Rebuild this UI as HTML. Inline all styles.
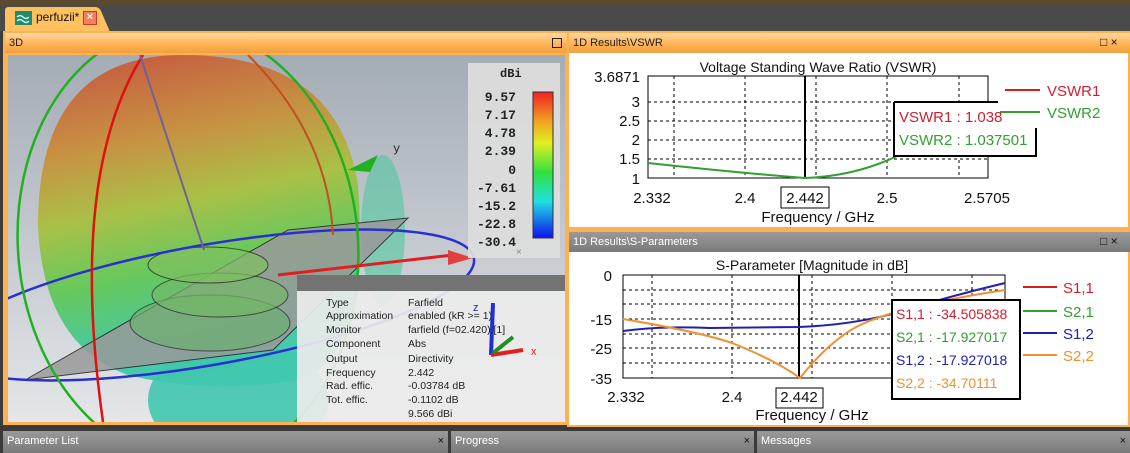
<!DOCTYPE html>
<html><head><meta charset="utf-8"><style>
*{margin:0;padding:0;box-sizing:border-box}
body{width:1130px;height:453px;overflow:hidden;background:#3c3c3c;font-family:"Liberation Sans",sans-serif;position:relative}
.a{position:absolute}
.hdr{position:absolute;height:20px;font-size:11px;line-height:20px;padding-left:4px;color:#222;overflow:hidden}
.org{background:linear-gradient(#ffd9a0,#ffb050 60%,#f0a040)}
.gry{background:linear-gradient(#9a9a9a,#7a7a7a);color:#fff}
</style></head><body>
<div class="a" style="left:0;top:0;width:1130px;height:5px;background:#5a4a30"></div>
<div class="a" style="left:0;top:5px;width:1130px;height:26px;background:#4a4a4a"></div>
<svg class="a" style="left:0;top:4px" width="120" height="28"><path d="M5 28 V6 Q5 3 9 3 H95 Q99 3 101 7 L110 28 Z" fill="#ffc060"/></svg>
<div class="a" style="left:15px;top:11px;width:17px;height:14px;background:#1f8a70"></div>
<svg class="a" style="left:15px;top:11px" width="17" height="14"><path d="M2 6 q3-3 6 0 t6 0 M2 10 q3-3 6 0 t6 0" stroke="#cfe" fill="none" stroke-width="1.3"/></svg>
<div class="a" style="left:36px;top:10px;font-size:12px;color:#111">perfuzii*</div>
<div class="a" style="left:83px;top:11px;width:14px;height:14px;background:#f08060;border:1px solid #c04020;color:#fff;font-size:11px;line-height:11px;text-align:center;font-weight:bold">×</div>
<div class="a" style="left:3px;top:31px;width:565px;height:394px;background:#ffb050"></div>
<div class="hdr org" style="left:5px;top:33px;width:562px">3D</div>
<div class="a" style="left:552px;top:38px;width:10px;height:10px;border:1px solid #222"></div>
<!-- 3D view -->
<svg class="a" style="left:8px;top:55px" width="557" height="367">
<defs>
<linearGradient id="bg" x1="0" y1="0" x2="0" y2="1"><stop offset="0" stop-color="#a4acb6"/><stop offset="1" stop-color="#e4e6e8"/></linearGradient>
<linearGradient id="sp" x1="0.3" y1="0" x2="0.5" y2="1"><stop offset="0" stop-color="#c85a3a"/><stop offset="0.25" stop-color="#c8903c"/><stop offset="0.45" stop-color="#a8c040"/><stop offset="0.65" stop-color="#60c858"/><stop offset="0.85" stop-color="#40c8a0"/><stop offset="1" stop-color="#40c8b0"/></linearGradient>
<linearGradient id="cb" x1="0" y1="0" x2="0" y2="1"><stop offset="0" stop-color="#f02020"/><stop offset="0.2" stop-color="#f0a020"/><stop offset="0.35" stop-color="#e0f020"/><stop offset="0.55" stop-color="#30e040"/><stop offset="0.75" stop-color="#20e0e0"/><stop offset="1" stop-color="#1010f0"/></linearGradient>
</defs>
<rect width="557" height="367" fill="url(#bg)"/>
<ellipse cx="230" cy="345" rx="90" ry="60" fill="#40c8b0" opacity="0.9"/>
<path d="M30 170 Q30 0 175 0 Q330 0 350 130 Q355 190 345 250 Q335 310 290 325 Q200 340 120 320 Q35 290 30 170Z" fill="url(#sp)" opacity="0.95"/>
<ellipse cx="375" cy="175" rx="22" ry="75" fill="#50c8a0" opacity="0.6"/>
<polygon points="17,325 265,295 400,163 280,175" fill="#9a9a9a" stroke="#222" opacity="0.85"/>
<ellipse cx="202" cy="268" rx="80" ry="28" fill="#6cb070" stroke="#222" opacity="0.7"/>
<ellipse cx="212" cy="240" rx="68" ry="22" fill="#74b868" stroke="#222" opacity="0.7"/>
<ellipse cx="200" cy="210" rx="60" ry="18" fill="#80c060" stroke="#222" opacity="0.7"/>
<ellipse cx="200" cy="250" rx="270" ry="60" transform="rotate(-10 200 250)" fill="none" stroke="#2830d0" stroke-width="2.5"/>
<ellipse cx="180" cy="190" rx="170" ry="220" transform="rotate(-5 180 190)" fill="none" stroke="#20b020" stroke-width="2.5"/>
<path d="M135 0 Q60 120 95 367" fill="none" stroke="#e01010" stroke-width="2.5"/>
<path d="M240 0 Q320 80 325 180" fill="none" stroke="#c05020" stroke-width="2"/>
<path d="M132 0 L196 195" stroke="#7060a0" stroke-width="2"/>
<path d="M270 220 L445 200" stroke="#e02020" stroke-width="3"/>
<path d="M440 195 L465 203 L440 210Z" fill="#e04040"/>
<path d="M340 115 L370 100 L362 117Z" fill="#20b020"/>
<text x="385" y="97" font-size="12" font-family="Liberation Mono" fill="#222">y</text>
<rect x="460" y="8" width="92" height="195" fill="#dcdcdc" opacity="0.95"/>
<text x="492" y="22" font-size="12" font-weight="bold" font-family="Liberation Mono" fill="#222">dBi</text>
<rect x="525" y="37" width="20" height="146" fill="url(#cb)" stroke="#333"/>
<g font-size="13" font-weight="bold" font-family="Liberation Mono" fill="#222" text-anchor="end">
<text x="508" y="46">9.57</text><text x="508" y="64">7.17</text><text x="508" y="82">4.78</text><text x="508" y="100">2.39</text><text x="508" y="119">0</text><text x="508" y="137">-7.61</text><text x="508" y="155">-15.2</text><text x="508" y="173">-22.8</text><text x="508" y="191">-30.4</text></g>
<text x="508" y="200" font-size="10" fill="#888">×</text>
<rect x="289" y="220" width="268" height="147" fill="#ececec" opacity="0.92"/>
<rect x="289" y="220" width="268" height="16" fill="#666" opacity="0.9"/>
<g font-size="10.5" font-family="Liberation Sans" fill="#222">
<text x="318" y="251">Type</text><text x="318" y="264">Approximation</text><text x="318" y="278">Monitor</text><text x="318" y="292">Component</text><text x="318" y="307">Output</text><text x="318" y="321">Frequency</text><text x="318" y="334">Rad. effic.</text><text x="318" y="348">Tot. effic.</text>
<text x="400" y="251">Farfield</text><text x="400" y="264">enabled (kR &gt;= 1)</text><text x="400" y="278">farfield (f=02.420) [1]</text><text x="400" y="292">Abs</text><text x="400" y="307">Directivity</text><text x="400" y="321">2.442</text><text x="400" y="334">-0.03784 dB</text><text x="400" y="348">-0.1102 dB</text><text x="400" y="362">9.566 dBi</text></g>
<path d="M485 248 L483 300" stroke="#2030d0" stroke-width="4"/>
<path d="M483 300 L515 295" stroke="#e02020" stroke-width="4"/>
<path d="M485 298 L505 282" stroke="#209020" stroke-width="4"/>
<text x="465" y="256" font-size="11" fill="#2030a0">z</text>
<text x="523" y="300" font-size="11" fill="#e02020">x</text>
</svg>
<!-- VSWR panel -->
<div class="a" style="left:567px;top:31px;width:563px;height:200px;background:#ffb050"></div>
<div class="hdr org" style="left:569px;top:33px;width:561px">1D Results\VSWR</div>
<div class="a" style="left:1100px;top:35px;font-size:12px;color:#111">□ ×</div>
<svg class="a" style="left:569px;top:53px;background:#fff" width="559" height="174">
<g transform="translate(-569,-53)" font-family="Liberation Sans,sans-serif">
<text x="818" y="72" font-size="14" text-anchor="middle" fill="#111">Voltage Standing Wave Ratio (VSWR)</text>
<g stroke="#000" stroke-dasharray="3,3" stroke-width="1"><line x1="648" x2="988" y1="102" y2="102"/><line x1="648" x2="988" y1="121" y2="121"/><line x1="648" x2="988" y1="140" y2="140"/><line x1="648" x2="988" y1="159" y2="159"/>
<line x1="674" x2="674" y1="76" y2="178"/><line x1="745" x2="745" y1="76" y2="178"/><line x1="816" x2="816" y1="76" y2="178"/><line x1="887" x2="887" y1="76" y2="178"/><line x1="959" x2="959" y1="76" y2="178"/></g>
<rect x="648" y="76" width="340" height="102" fill="none" stroke="#000"/>
<line x1="805" x2="805" y1="76" y2="178" stroke="#000" stroke-width="2"/>
<path d="M648 163 Q730 172 805 178 Q860 176 905 152" fill="none" stroke="#30a030" stroke-width="2"/>
<g font-size="15" text-anchor="end" fill="#111"><text x="640" y="82">3.6871</text><text x="640" y="107">3</text><text x="640" y="126">2.5</text><text x="640" y="145">2</text><text x="640" y="164">1.5</text><text x="640" y="184">1</text></g>
<g font-size="15" text-anchor="middle" fill="#111"><text x="652" y="203">2.332</text><text x="745" y="203">2.4</text><text x="805" y="203">2.442</text><text x="887" y="203">2.5</text><text x="987" y="203">2.5705</text><text x="818" y="222">Frequency / GHz</text></g>
<rect x="781" y="187" width="48" height="21" fill="none" stroke="#000"/>
<line x1="1005" x2="1040" y1="90" y2="90" stroke="#d02020" stroke-width="2"/><line x1="1005" x2="1040" y1="112" y2="112" stroke="#30a030" stroke-width="2"/>
<text x="1047" y="96" font-size="15" fill="#d02030">VSWR1</text><text x="1047" y="118" font-size="15" fill="#30a030">VSWR2</text>
<rect x="894" y="102" width="142" height="55" fill="#fff"/>
<path d="M894 102 H998 M1036 128 V156 H894 V102" fill="none" stroke="#000" stroke-width="2"/>
<rect x="996" y="104" width="44" height="22" fill="#fff"/>
<line x1="1000" x2="1040" y1="112" y2="112" stroke="#30a030" stroke-width="2"/>
<text x="899" y="122" font-size="15" fill="#d02030">VSWR1 : 1.038</text><text x="899" y="145" font-size="15" fill="#30a030">VSWR2 : 1.037501</text>
</g></svg>
<!-- S-param panel -->
<div class="a" style="left:567px;top:230px;width:563px;height:197px;background:#ffb050"></div>
<div class="hdr gry" style="left:569px;top:232px;width:561px;color:#fff">1D Results\S-Parameters</div>
<div class="a" style="left:1100px;top:234px;font-size:12px;color:#111">□ ×</div>
<svg class="a" style="left:569px;top:252px;background:#fff" width="559" height="173">
<g transform="translate(-569,-252)" font-family="Liberation Sans,sans-serif">
<text x="812" y="270" font-size="14" text-anchor="middle" fill="#111">S-Parameter [Magnitude in dB]</text>
<g stroke="#000" stroke-dasharray="3,3"><line x1="623" x2="1005" y1="290" y2="290"/><line x1="623" x2="1005" y1="304" y2="304"/><line x1="623" x2="1005" y1="319" y2="319"/><line x1="623" x2="1005" y1="334" y2="334"/><line x1="623" x2="1005" y1="348" y2="348"/><line x1="623" x2="1005" y1="363" y2="363"/>
<line x1="652" x2="652" y1="275" y2="378"/><line x1="732" x2="732" y1="275" y2="378"/><line x1="812" x2="812" y1="275" y2="378"/><line x1="892" x2="892" y1="275" y2="378"/><line x1="972" x2="972" y1="275" y2="378"/></g>
<rect x="623" y="275" width="382" height="103" fill="none" stroke="#000"/>
<line x1="799" x2="799" y1="275" y2="378" stroke="#000" stroke-width="2"/>
<path d="M623 331 Q660 326 710 328 L799 327 Q850 325 892 314 Q950 296 1005 283" fill="none" stroke="#2020b0" stroke-width="2"/>
<path d="M623 319 Q700 332 732 343 Q775 360 800 378 Q830 340 860 325 Q900 306 1005 290" fill="none" stroke="#f09030" stroke-width="2"/>
<g font-size="15" text-anchor="end" fill="#111"><text x="612" y="281">0</text><text x="612" y="325">-15</text><text x="612" y="354">-25</text><text x="612" y="384">-35</text></g>
<g font-size="15" text-anchor="middle" fill="#111"><text x="626" y="402">2.332</text><text x="732" y="402">2.4</text><text x="799" y="402">2.442</text><text x="812" y="420">Frequency / GHz</text></g>
<rect x="776" y="388" width="47" height="20" fill="none" stroke="#000"/>
<g stroke-width="2"><line x1="1023" x2="1057" y1="287" y2="287" stroke="#d02020"/><line x1="1023" x2="1057" y1="311" y2="311" stroke="#30a030"/><line x1="1023" x2="1057" y1="333" y2="333" stroke="#2020b0"/><line x1="1023" x2="1057" y1="355" y2="355" stroke="#f09030"/></g>
<g font-size="15"><text x="1063" y="293" fill="#d02030">S1,1</text><text x="1063" y="317" fill="#30a030">S2,1</text><text x="1063" y="339" fill="#2020b0">S1,2</text><text x="1063" y="361" fill="#f09030">S2,2</text></g>
<rect x="892" y="300" width="128" height="99" fill="#fff" stroke="#000" stroke-width="2"/>
<g font-size="14"><text x="896" y="319" fill="#d02030">S1,1 : -34.505838</text><text x="896" y="342" fill="#30a030">S2,1 : -17.927017</text><text x="896" y="365" fill="#2020b0">S1,2 : -17.927018</text><text x="896" y="388" fill="#f09030">S2,2 : -34.70111</text></g>
</g></svg>
<!-- bottom bars -->
<div class="a" style="left:0;top:427px;width:1130px;height:26px;background:#3a3a3a"></div>
<div class="hdr gry" style="left:3px;top:431px;width:445px;height:22px;line-height:20px">Parameter List<span style="position:absolute;right:4px;top:0;color:#111">×</span></div>
<div class="hdr gry" style="left:451px;top:431px;width:303px;height:22px;line-height:20px">Progress<span style="position:absolute;right:4px;top:0;color:#111">×</span></div>
<div class="hdr gry" style="left:757px;top:431px;width:373px;height:22px;line-height:20px">Messages<span style="position:absolute;right:4px;top:0;color:#111">×</span></div>
</body></html>
